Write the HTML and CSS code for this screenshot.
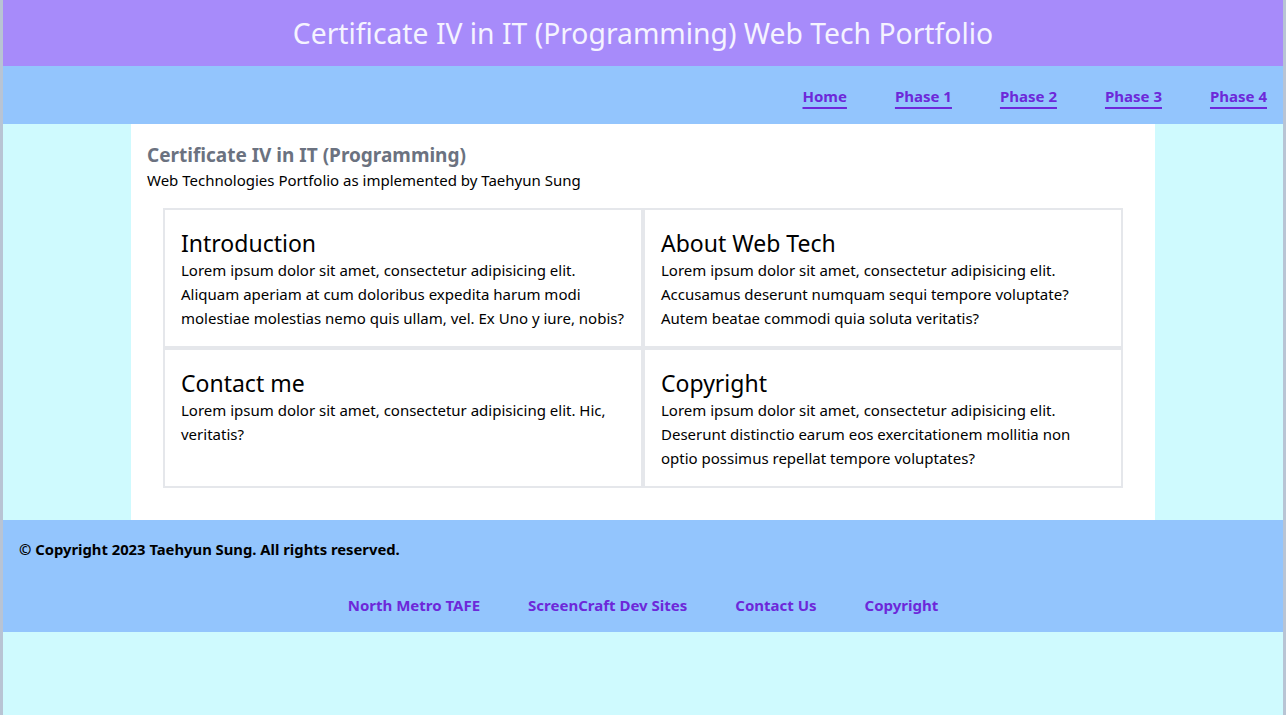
FILE: index.html
```html
<!DOCTYPE html>
<html lang="en">
<head>
<meta charset="utf-8">
<title>Web Tech Portfolio</title>
<link rel="stylesheet" href="styles.css">
</head>
<body>
<div class="page">
  <header class="site-header">
    <h1 class="site-title">Certificate IV in IT (Programming) Web Tech Portfolio</h1>
  </header>
  <nav class="top-nav">
    <a href="#" class="nav-link">Home</a>
    <a href="#" class="nav-link">Phase 1</a>
    <a href="#" class="nav-link">Phase 2</a>
    <a href="#" class="nav-link">Phase 3</a>
    <a href="#" class="nav-link">Phase 4</a>
  </nav>
  <main class="main">
    <div class="content">
      <h2 class="content-title">Certificate IV in IT (Programming)</h2>
      <p class="content-sub">Web Technologies Portfolio as implemented by Taehyun Sung</p>
      <div class="cards">
        <section class="card">
          <h3 class="card-title">Introduction</h3>
          <p class="card-text">Lorem ipsum dolor sit amet, consectetur adipisicing elit. Aliquam aperiam at cum doloribus expedita harum modi molestiae molestias nemo quis ullam, vel. Ex Uno y iure, nobis?</p>
        </section>
        <section class="card">
          <h3 class="card-title">About Web Tech</h3>
          <p class="card-text">Lorem ipsum dolor sit amet, consectetur adipisicing elit. Accusamus deserunt numquam sequi tempore voluptate? Autem beatae commodi quia soluta veritatis?</p>
        </section>
        <section class="card">
          <h3 class="card-title">Contact me</h3>
          <p class="card-text">Lorem ipsum dolor sit amet, consectetur adipisicing elit. Hic, veritatis?</p>
        </section>
        <section class="card">
          <h3 class="card-title">Copyright</h3>
          <p class="card-text">Lorem ipsum dolor sit amet, consectetur adipisicing elit. Deserunt distinctio earum eos exercitationem mollitia non optio possimus repellat tempore voluptates?</p>
        </section>
      </div>
    </div>
  </main>
  <footer class="site-footer">
    <p class="copyright">© Copyright 2023 Taehyun Sung. All rights reserved.</p>
    <div class="footer-links">
      <a href="#" class="footer-link">North Metro TAFE</a>
      <a href="#" class="footer-link">ScreenCraft Dev Sites</a>
      <a href="#" class="footer-link">Contact Us</a>
      <a href="#" class="footer-link">Copyright</a>
    </div>
  </footer>
  <div class="filler"></div>
</div>
</body>
</html>
```
FILE: styles.css
```css
* { box-sizing: border-box; }
html, body { height: 100%; }
body {
  margin: 0;
  background: #b8c4d4;
  font-family: "Noto Sans", "Open Sans", sans-serif;
  color: #000;
}
.page {
  margin: 0 3px;
  min-height: 100%;
  display: flex;
  flex-direction: column;
  background: #cffafe;
}
.site-header {
  background: #a78bfa;
  height: 66px;
  display: flex;
  align-items: center;
  justify-content: center;
}
.site-title {
  margin: 0;
  font-size: 28.3px;
  font-weight: 400;
  color: #f5f3ff;
  line-height: 36px;
}
.top-nav {
  background: #93c5fd;
  height: 58px;
  display: flex;
  justify-content: flex-end;
  align-items: center;
  gap: 48px;
  padding: 0 16px;
}
.nav-link {
  color: #6d28d9;
  font-weight: 700;
  font-size: 15px;
  line-height: 24px;
  text-decoration: underline;
  text-decoration-thickness: 2px;
  text-underline-offset: 5px;
  margin-top: 1px;
}
.main {
  display: flex;
  justify-content: center;
}
.content {
  width: 1024px;
  background: #fff;
  padding: 16px 16px 32px;
}
.content-title {
  margin: 0;
  padding-top: 2px;
  font-size: 19px;
  line-height: 26px;
  font-weight: 700;
  color: #6b7280;
}
.content-sub {
  margin: 0;
  font-size: 15px;
  line-height: 24px;
}
.cards {
  margin: 16px 16px 0;
  display: grid;
  grid-template-columns: 1fr 1fr;
}
.card {
  border: 2px solid #e5e7eb;
  height: 140px;
  padding: 16px;
}
.card-title {
  margin: 0;
  padding-top: 3px;
  font-size: 23px;
  line-height: 29px;
  font-weight: 400;
}
.card-text {
  margin: 0;
  font-size: 15px;
  line-height: 24px;
}
.site-footer {
  background: #93c5fd;
  padding: 17px 16px 15px;
}
.copyright {
  margin: 0;
  font-weight: 700;
  font-size: 14.8px;
  line-height: 24px;
}
.footer-links {
  margin-top: 32px;
  display: flex;
  justify-content: center;
  gap: 48px;
}
.footer-link {
  color: #6d28d9;
  font-weight: 700;
  font-size: 15px;
  line-height: 24px;
  text-decoration: none;
}
.filler { flex: 1; }
```
